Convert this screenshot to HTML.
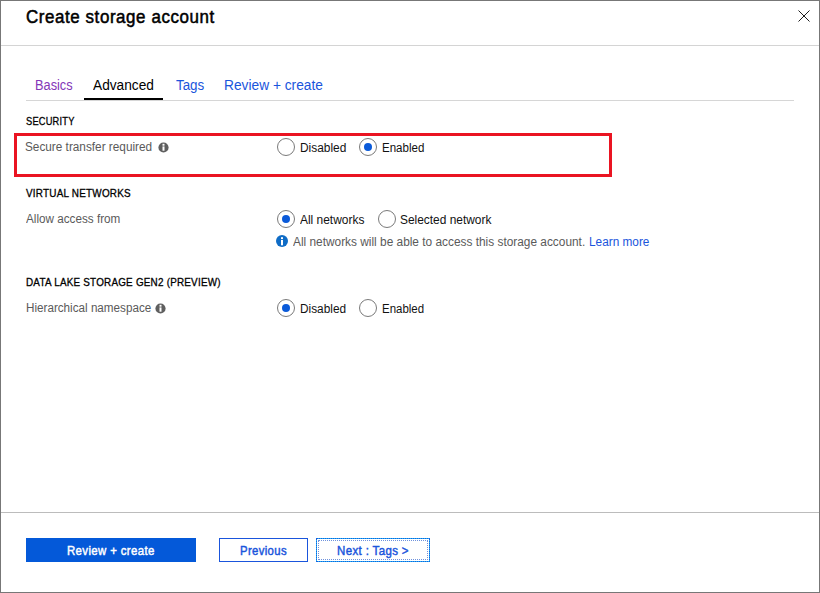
<!DOCTYPE html>
<html><head><meta charset="utf-8"><style>
html,body{margin:0;padding:0;background:#fff;}
body{width:820px;height:593px;position:relative;overflow:hidden;font-family:"Liberation Sans",sans-serif;}
.frame{position:absolute;left:0;top:0;width:818px;height:591px;border:1px solid #777777;}
.t{position:absolute;white-space:pre;transform-origin:0 0;}
.line{position:absolute;}
.rad{position:absolute;width:16px;height:16px;border:1px solid #7a7a7a;border-radius:50%;background:#fff;}
.dot{position:absolute;width:8px;height:8px;border-radius:50%;background:#0a5ad9;}
.ic{position:absolute;}
.btn{position:absolute;box-sizing:border-box;}
</style></head><body>
<div class="frame"></div>
<div class="line" style="left:1px;top:45px;width:818px;height:1px;background:#d4d4d4"></div>
<svg style="position:absolute;left:797px;top:9px" width="14" height="14" viewBox="0 0 14 14"><path d="M1.5 1.5 L12.5 12.5 M12.5 1.5 L1.5 12.5" stroke="#111" stroke-width="0.95" fill="none"/></svg>
<div class="line" style="left:26px;top:100px;width:768px;height:1px;background:#d6d6d6"></div>
<div class="line" style="left:84px;top:98px;width:79px;height:2px;background:#000"></div>
<div style="position:absolute;left:14px;top:133px;width:592px;height:38px;border:3px solid #ea1422"></div>
<div class="rad" style="left:276.8px;top:137.9px"></div>
<div class="rad" style="left:358.8px;top:137.9px"></div><div class="dot" style="left:363.8px;top:142.9px"></div>
<svg class="ic" style="left:157.7px;top:141.7px" width="11" height="11" viewBox="0 0 11 11"><circle cx="5.5" cy="5.5" r="5.1" fill="#5f5f5f"/><rect x="4.5" y="1.8" width="2" height="1.9" fill="#fff"/><rect x="4.5" y="4.4" width="2" height="4.3" fill="#fff"/></svg>
<div class="rad" style="left:276.8px;top:209.9px"></div><div class="dot" style="left:281.8px;top:214.9px"></div>
<div class="rad" style="left:377.8px;top:209.9px"></div>
<svg class="ic" style="left:276.0px;top:235.0px" width="12" height="12" viewBox="0 0 12 12"><circle cx="6" cy="6" r="6" fill="#0f6cc6"/><rect x="5" y="2.2" width="2" height="1.9" fill="#fff"/><rect x="5" y="5" width="2" height="5.3" fill="#fff"/></svg>
<svg class="ic" style="left:155.3px;top:302.7px" width="11" height="11" viewBox="0 0 11 11"><circle cx="5.5" cy="5.5" r="5.1" fill="#5f5f5f"/><rect x="4.5" y="1.8" width="2" height="1.9" fill="#fff"/><rect x="4.5" y="4.4" width="2" height="4.3" fill="#fff"/></svg>
<div class="rad" style="left:277.0px;top:299.0px"></div><div class="dot" style="left:282.0px;top:304.0px"></div>
<div class="rad" style="left:359.0px;top:299.0px"></div>
<div class="line" style="left:1px;top:512px;width:818px;height:1px;background:#bcbcbc"></div>
<div class="btn" style="left:26px;top:538px;width:170px;height:24px;background:#0459d9"></div>
<div class="btn" style="left:219px;top:538px;width:89px;height:24px;border:1px solid #1a55dc"></div>
<div class="btn" style="left:316px;top:538px;width:114px;height:24px;border:1px solid #1fb0f5"></div>
<div class="btn" style="left:316px;top:538px;width:114px;height:24px;border:1px dotted rgba(20,70,215,0.75)"></div>
<div class="btn" style="left:318px;top:540px;width:110px;height:20px;border:1px dotted #6f92dd"></div>
<div id="title" class="t" style="left:26.07px;top:8.91px;font-size:17.50px;line-height:17.50px;font-weight:normal;color:#000000;-webkit-text-stroke:0.5px #000000;letter-spacing:0.600px;transform:scaleX(0.9673)">Create storage account</div>
<div id="tab1" class="t" style="left:34.87px;top:77.81px;font-size:14.00px;line-height:14.00px;font-weight:normal;color:#8436b8;transform:scaleX(0.9125)">Basics</div>
<div id="tab2" class="t" style="left:92.93px;top:77.81px;font-size:14.00px;line-height:14.00px;font-weight:normal;color:#000000;transform:scaleX(0.9776)">Advanced</div>
<div id="tab3" class="t" style="left:176.15px;top:77.81px;font-size:14.00px;line-height:14.00px;font-weight:normal;color:#1a55dc;transform:scaleX(0.9550)">Tags</div>
<div id="tab4" class="t" style="left:224.45px;top:77.81px;font-size:14.00px;line-height:14.00px;font-weight:normal;color:#1a55dc;transform:scaleX(0.9816)">Review + create</div>
<div id="h1" class="t" style="left:26.48px;top:116.21px;font-size:10.90px;line-height:10.90px;font-weight:normal;color:#000000;-webkit-text-stroke:0.3px #000000;letter-spacing:0.250px;transform:scaleX(0.8517)">SECURITY</div>
<div id="l1" class="t" style="left:24.86px;top:141.01px;font-size:12.50px;line-height:12.50px;font-weight:normal;color:#5a5a5a;transform:scaleX(0.9429)">Secure transfer required</div>
<div id="r1a" class="t" style="left:299.74px;top:141.60px;font-size:12.50px;line-height:12.50px;font-weight:normal;color:#111111;transform:scaleX(0.9531)">Disabled</div>
<div id="r1b" class="t" style="left:381.93px;top:141.60px;font-size:12.50px;line-height:12.50px;font-weight:normal;color:#111111;transform:scaleX(0.9237)">Enabled</div>
<div id="h2" class="t" style="left:26.02px;top:188.21px;font-size:10.90px;line-height:10.90px;font-weight:normal;color:#000000;-webkit-text-stroke:0.3px #000000;letter-spacing:0.250px;transform:scaleX(0.9093)">VIRTUAL NETWORKS</div>
<div id="l2" class="t" style="left:25.93px;top:212.91px;font-size:12.50px;line-height:12.50px;font-weight:normal;color:#5a5a5a;transform:scaleX(0.9366)">Allow access from</div>
<div id="r2a" class="t" style="left:300.35px;top:213.91px;font-size:12.50px;line-height:12.50px;font-weight:normal;color:#111111;transform:scaleX(0.9552)">All networks</div>
<div id="r2b" class="t" style="left:400.00px;top:213.91px;font-size:12.50px;line-height:12.50px;font-weight:normal;color:#111111;transform:scaleX(0.9531)">Selected network</div>
<div id="info" class="t" style="left:293.32px;top:235.50px;font-size:12.00px;line-height:12.00px;font-weight:normal;color:#5a5a5a;transform:scaleX(0.9889)">All networks will be able to access this storage account.</div>
<div id="learn" class="t" style="left:589.40px;top:235.50px;font-size:12.00px;line-height:12.00px;font-weight:normal;color:#1a55dc;transform:scaleX(0.9840)">Learn more</div>
<div id="h3" class="t" style="left:26.45px;top:276.71px;font-size:10.90px;line-height:10.90px;font-weight:normal;color:#000000;-webkit-text-stroke:0.3px #000000;letter-spacing:0.250px;transform:scaleX(0.9059)">DATA LAKE STORAGE GEN2 (PREVIEW)</div>
<div id="l3" class="t" style="left:26.36px;top:302.31px;font-size:12.50px;line-height:12.50px;font-weight:normal;color:#5a5a5a;transform:scaleX(0.9340)">Hierarchical namespace</div>
<div id="r3a" class="t" style="left:300.15px;top:302.60px;font-size:12.50px;line-height:12.50px;font-weight:normal;color:#111111;transform:scaleX(0.9471)">Disabled</div>
<div id="r3b" class="t" style="left:382.33px;top:302.60px;font-size:12.50px;line-height:12.50px;font-weight:normal;color:#111111;transform:scaleX(0.9182)">Enabled</div>
<div id="b1" class="t" style="left:67.47px;top:544.81px;font-size:12.40px;line-height:12.40px;font-weight:normal;color:#ffffff;-webkit-text-stroke:0.45px #ffffff;letter-spacing:0.400px;transform:scaleX(0.9210)">Review + create</div>
<div id="b2" class="t" style="left:239.50px;top:544.81px;font-size:12.40px;line-height:12.40px;font-weight:normal;color:#1a55dc;-webkit-text-stroke:0.45px #1a55dc;letter-spacing:0.400px;transform:scaleX(0.9130)">Previous</div>
<div id="b3" class="t" style="left:337.40px;top:544.81px;font-size:12.40px;line-height:12.40px;font-weight:normal;color:#1a55dc;-webkit-text-stroke:0.45px #1a55dc;letter-spacing:0.400px;transform:scaleX(0.9266)">Next : Tags &gt;</div>
</body></html>
